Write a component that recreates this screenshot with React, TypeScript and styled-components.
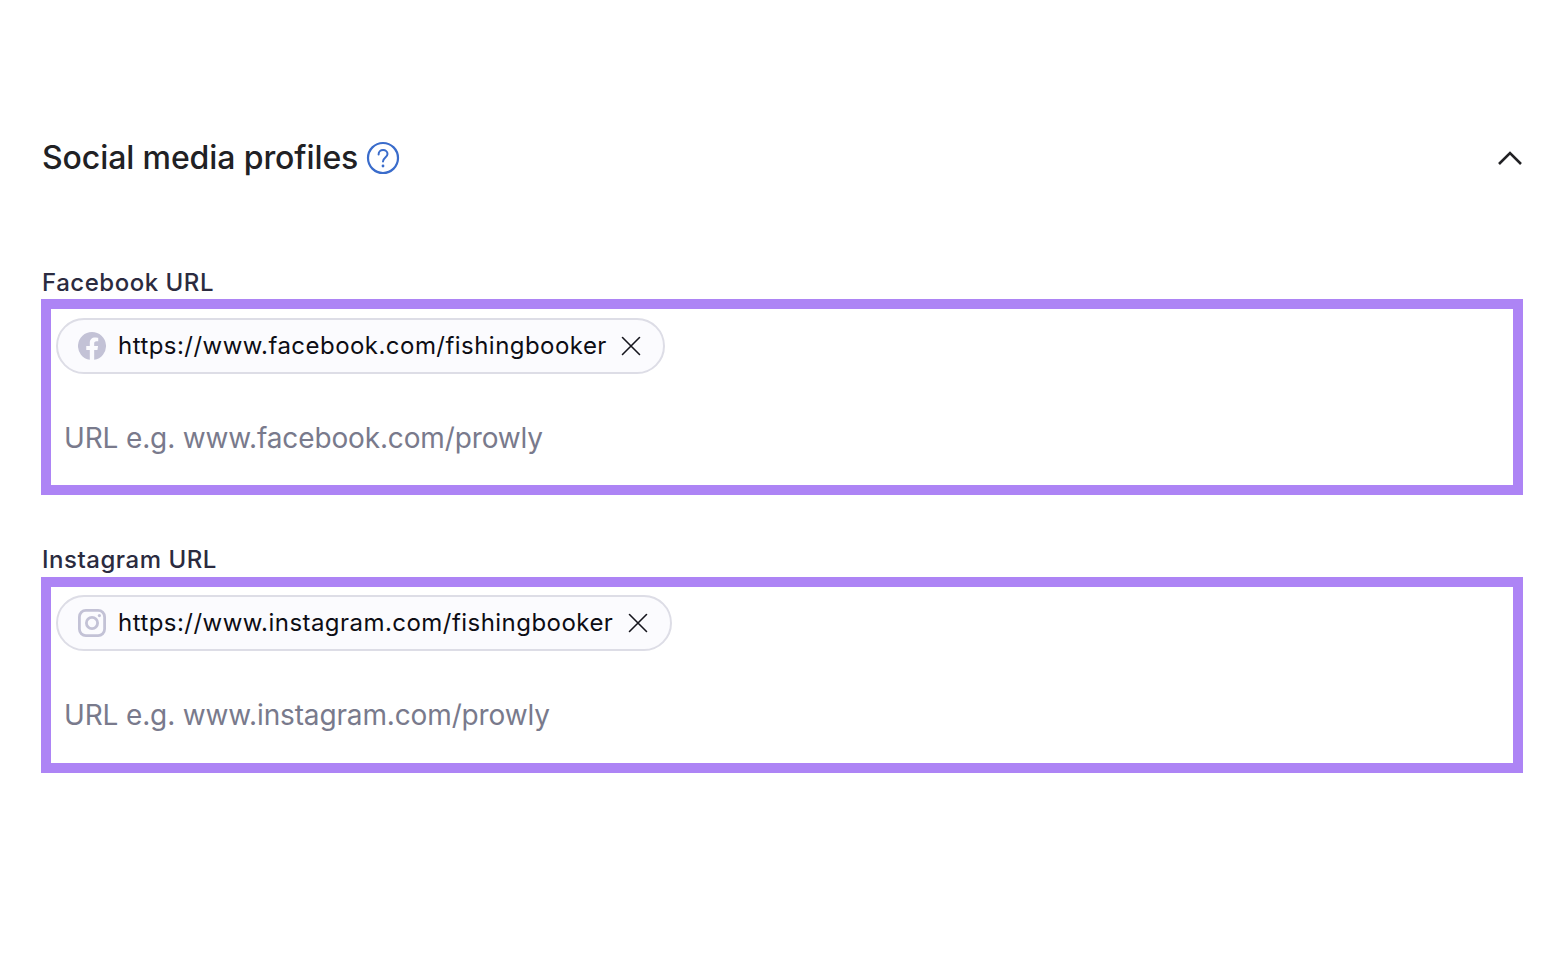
import React from 'react';
import styled, { createGlobalStyle } from 'styled-components';

const GlobalStyle = createGlobalStyle`
  html, body {
    margin: 0;
    padding: 0;
    background: #ffffff;
    font-family: Inter, "Liberation Sans", sans-serif;
  }
`;

const Page = styled.div`
  width: 1568px;
  height: 972px;
  box-sizing: border-box;
  padding: 136px 45px 0 41px;
`;

const Header = styled.div`
  display: flex;
  align-items: center;
  height: 44px;
  padding-left: 1px;
  margin-bottom: 86.6px;
`;

const Title = styled.h2`
  margin: 0;
  font-size: 32px;
  line-height: 44px;
  font-weight: 450;
  letter-spacing: -0.1px;
  color: #212124;
`;

const HelpIcon = styled.svg`
  width: 34px;
  height: 34px;
  margin-left: 8px;
  flex: none;
`;

const Chevron = styled.svg`
  width: 26px;
  height: 16px;
  margin-left: auto;
  flex: none;
`;

const Field = styled.div`
  margin-bottom: 49.2px;
`;

const Label = styled.div`
  height: 32.4px;
  padding-left: 1px;
  font-size: 24px;
  line-height: 32px;
  font-weight: 450;
  letter-spacing: 0.52px;
  color: #2b2b40;
`;

const Box = styled.div`
  box-sizing: border-box;
  height: 196px;
  border: 10px solid #ad84f5;
  padding: 8.6px 5px 0;
  background: #ffffff;
`;

const Chip = styled.div`
  display: inline-flex;
  align-items: center;
  box-sizing: border-box;
  height: 56px;
  padding: 0 20.6px 0 20px;
  border: 2px solid #dddde6;
  border-radius: 28px;
  background: #fbfbfe;
`;

const ChipText = styled.span`
  margin-left: 12px;
  font-size: 24px;
  line-height: 34px;
  letter-spacing: 0.46px;
  color: #0d0d14;
`;

const BrandIcon = styled.svg`
  width: 28px;
  height: 28px;
  flex: none;
`;

const CloseIcon = styled.svg`
  width: 22px;
  height: 22px;
  margin-left: 13.6px;
  flex: none;
`;

const Placeholder = styled.div`
  margin-top: 46px;
  padding-left: 8px;
  font-size: 28px;
  line-height: 36px;
  letter-spacing: -0.14px;
  color: #797a8c;
`;

const FacebookGlyph = () => (
  <BrandIcon viewBox="0 0 28 28">
    <path
      fill="#c3c2d6"
      d="M14 0a14 14 0 0 0-2.2 27.83V18.05H8.26V14h3.54v-3.09c0-3.51 2.09-5.45 5.29-5.45 1.53 0 3.13.27 3.13.27v3.45h-1.76c-1.74 0-2.28 1.08-2.28 2.18V14h3.88l-.62 4.05H16.18v9.78A14 14 0 0 0 14 0z"
    />
  </BrandIcon>
);

const InstagramGlyph = () => (
  <BrandIcon viewBox="0 0 28 28">
    <rect x="1.4" y="1.4" width="25.2" height="25.2" rx="6.5" fill="none" stroke="#c3c2d6" strokeWidth="2.8" />
    <circle cx="14" cy="14" r="5.6" fill="none" stroke="#c3c2d6" strokeWidth="2.8" />
    <circle cx="21.4" cy="6.6" r="1.6" fill="#c3c2d6" />
  </BrandIcon>
);

const CloseGlyph = () => (
  <CloseIcon viewBox="0 0 22 22">
    <path d="M2.5 2.5l17 17M19.5 2.5l-17 17" fill="none" stroke="#16161d" strokeWidth="1.6" strokeLinecap="round" />
  </CloseIcon>
);

const socials = [
  {
    label: 'Facebook URL',
    url: 'https://www.facebook.com/fishingbooker',
    hint: 'URL e.g. www.facebook.com/prowly',
    icon: <FacebookGlyph />,
  },
  {
    label: 'Instagram URL',
    url: 'https://www.instagram.com/fishingbooker',
    hint: 'URL e.g. www.instagram.com/prowly',
    icon: <InstagramGlyph />,
  },
];

const App: React.FC = () => {
  return (
    <Page>
      <GlobalStyle />
      <Header>
        <Title>Social media profiles</Title>
        <HelpIcon viewBox="0 0 34 34">
          <circle cx="17" cy="17" r="15" fill="none" stroke="#3a6ccb" strokeWidth="2.2" />
          <path
            d="M12.6 13.4c0-2.6 2-4.3 4.5-4.3s4.4 1.6 4.4 3.9c0 3.4-4.5 3.6-4.5 7.4"
            fill="none"
            stroke="#3a6ccb"
            strokeWidth="2"
            strokeLinecap="round"
          />
          <circle cx="17" cy="25" r="1.4" fill="#3a6ccb" />
        </HelpIcon>
        <Chevron viewBox="0 0 26 16">
          <path d="M2 14L13 3l11 11" fill="none" stroke="#212124" strokeWidth="2.6" />
        </Chevron>
      </Header>
      {socials.map((item) => (
        <Field key={item.label}>
          <Label>{item.label}</Label>
          <Box>
            <Chip>
              {item.icon}
              <ChipText>{item.url}</ChipText>
              <CloseGlyph />
            </Chip>
            <Placeholder>{item.hint}</Placeholder>
          </Box>
        </Field>
      ))}
    </Page>
  );
};

export default App;
